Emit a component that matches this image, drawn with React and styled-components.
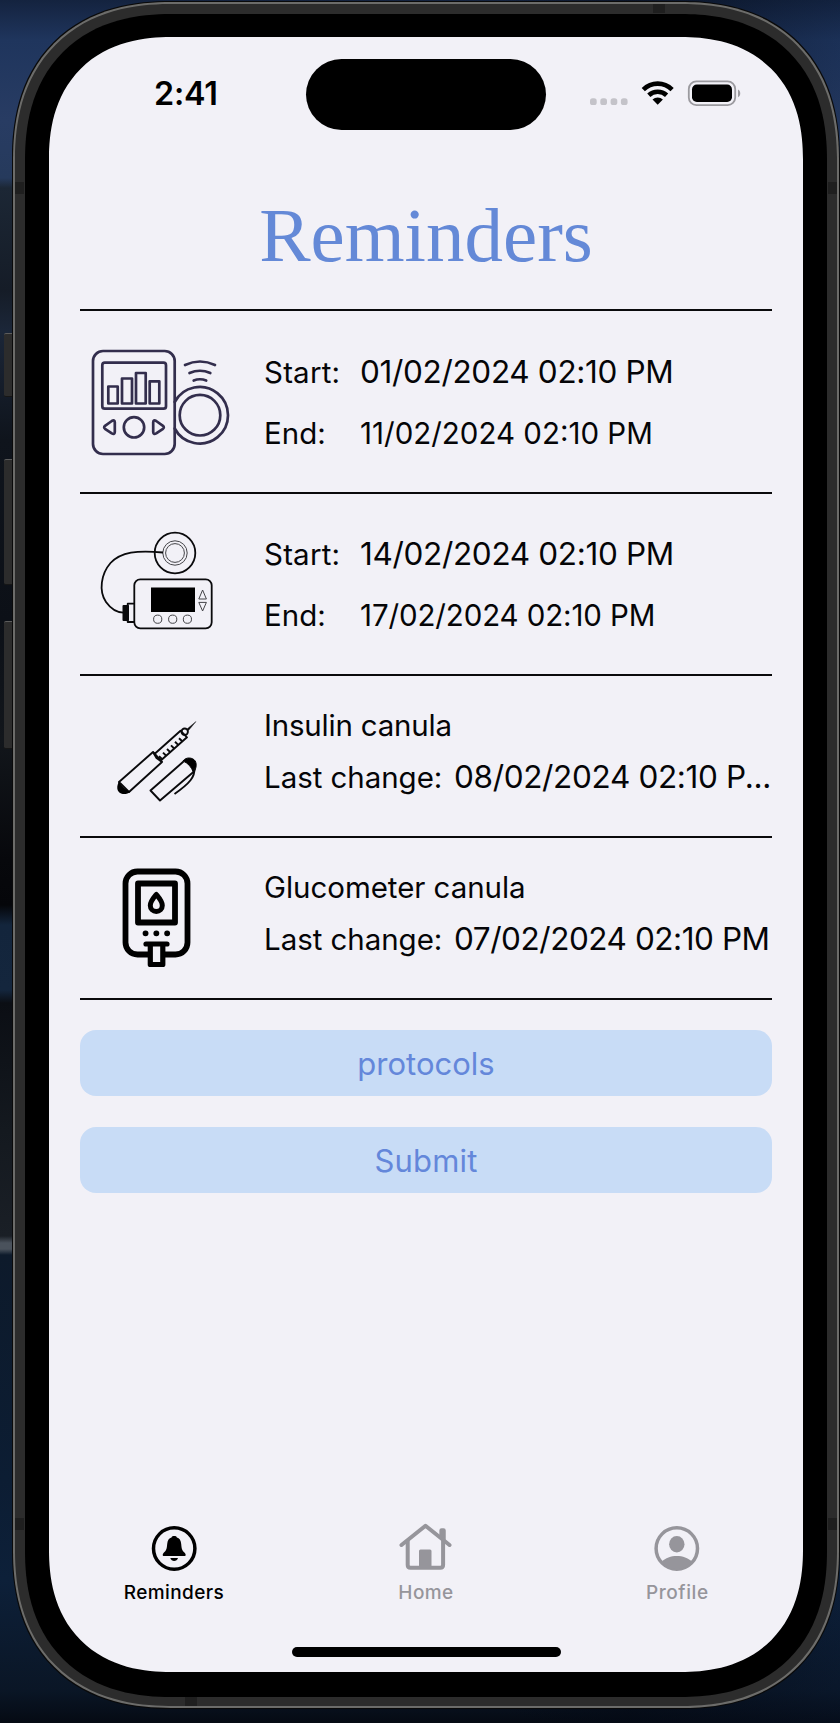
import React from "react";
import styled, { createGlobalStyle } from "styled-components";

const Global = createGlobalStyle`
  *, *::before, *::after { box-sizing: border-box; }
  body { margin: 0; font-family: Inter, "Liberation Sans", sans-serif; color: #050507; }
`;

const Desktop = styled.div`
  width: 840px;
  height: 1723px;
  overflow: hidden;
  padding: 2px 0 0 13px;
  position: relative;
  background:
    linear-gradient(90deg, transparent 0 60%, rgba(4, 10, 22, 0.55) 75%, rgba(10, 28, 60, 0.2) 100%),
    linear-gradient(
      180deg,
      #14233f 0, #1f355d 40px, #283c63 120px, #263a5c 178px, #1c2735 188px,
      #151c27 290px, #1b2638 330px, #0f141c 440px, #0c1017 620px, #12161b 740px,
      #07080c 860px, #05060a 905px, #13253c 925px, #14263d 990px, #0b0e14 1003px,
      #14191f 1130px, #1a1f26 1236px, #4a525c 1243px, #4a525c 1249px, #0d1a2b 1255px,
      #0c1d33 1480px, #0d2039 1580px, #0a1626 1690px, #050a13 1723px
    );
`;

const SideButton = styled.div`
  position: absolute;
  left: 4px;
  top: ${(p) => p.$top}px;
  width: 10px;
  height: ${(p) => p.$height}px;
  background: #2c2c2c;
  border-top: 1px solid #5c5c5c;
  border-bottom: 1px solid #161616;
  border-radius: 2px 0 0 2px;
`;

const Frame = styled.div`
  position: relative;
  width: 826px;
  height: 1706px;
  padding: 10px 10px 9px;
  background: #2c2c2c;
  border: 2px solid #6c6c6a;
  border-radius: 138px;
  box-shadow: 0 0 0 1px #0a0a0a;
  @supports (corner-shape: superellipse(1.2)) {
    border-radius: 158px;
    corner-shape: superellipse(1.2);
  }
`;

const Band = styled.div`
  position: absolute;
  background: #1f1f1f;
  width: ${(p) => (p.$vertical ? 9 : 12)}px;
  height: ${(p) => (p.$vertical ? 12 : 9)}px;
  ${(p) => p.$side}: 0;
  ${(p) => (p.$vertical ? "top" : "left")}: ${(p) => p.$at}px;
`;

const Bezel = styled.div`
  height: 100%;
  padding: 23px 24px 25px;
  background: #000;
  border-radius: 128px;
  @supports (corner-shape: superellipse(1.2)) {
    border-radius: 146px;
    corner-shape: superellipse(1.2);
  }
`;

const Screen = styled.main`
  height: 100%;
  display: flex;
  flex-direction: column;
  background: #f2f1f7;
  border-radius: 108px;
  @supports (corner-shape: superellipse(1.2)) {
    border-radius: 122px;
    corner-shape: superellipse(1.2);
  }
`;

const StatusBar = styled.header`
  flex: none;
  height: 92px;
  padding-top: 22px;
  display: grid;
  grid-template-columns: 257px 240px 1fr;
  align-items: start;
`;

const Clock = styled.div`
  height: 54px;
  padding: 17px 0 0 105px;
  font-size: 32.3px;
  line-height: 36px;
  font-weight: 600;
  letter-spacing: -0.2px;
  color: #000;
`;

const Island = styled.div`
  height: 70.5px;
  border-radius: 36px;
  background: #000;
`;

const Indicators = styled.div`
  display: flex;
  align-items: flex-end;
  padding: 21px 0 0 44px;
`;

const Title = styled.h1`
  flex: none;
  margin: 0;
  height: 180px;
  padding-top: 62px;
  font: 400 77px/88px "Liberation Serif", serif;
  text-align: center;
  color: #6489d7;
`;

const List = styled.section`
  flex: none;
  margin: 0 31px;
  border-top: 2px solid #0a0a0c;
`;

const Row = styled.article`
  height: ${(p) => p.$height}px;
  display: flex;
  border-bottom: 2px solid #0a0a0c;
`;

const Picture = styled.div`
  flex: none;
  width: 184px;
  svg { display: block; }
`;

const Details = styled.div`
  flex: 1;
  min-width: 0;
  padding-top: ${(p) => p.$top}px;
  display: flex;
  flex-direction: column;
  gap: ${(p) => p.$gap}px;
`;

const Line = styled.div`
  height: 40px;
  display: flex;
  align-items: center;
  white-space: nowrap;
  line-height: 40px;
`;

const Label = styled.span`
  flex: none;
  width: ${(p) => (p.$width ? p.$width + "px" : "auto")};
  font-size: 29.5px;
  letter-spacing: ${(p) => p.$track || 0}px;
`;

const Value = styled.span`
  font-size: ${(p) => p.$size || 31.5}px;
  letter-spacing: ${(p) => p.$track || 0}px;
`;

const Actions = styled.div`
  flex: 1;
  padding: 30px 31px 0;
  display: flex;
  flex-direction: column;
  gap: 31px;
`;

const Button = styled.button`
  height: 66px;
  border: 0;
  border-radius: 16px;
  background: #c8dcf6;
  color: #6487da;
  font: 400 31px/66px Inter, sans-serif;
  letter-spacing: ${(p) => p.$track || 0}px;
`;

const Tabs = styled.nav`
  flex: none;
  height: 150px;
  padding-top: 24.5px;
  display: grid;
  grid-template-columns: repeat(3, 1fr);
`;

const Tab = styled.div`
  display: flex;
  flex-direction: column;
  align-items: center;
  color: ${(p) => (p.$active ? "#000" : "#96959b")};
  font-size: 19px;
  line-height: 24px;
  font-weight: 500;
  letter-spacing: ${(p) => p.$track || 0}px;
  padding-right: ${(p) => (p.$active ? 1.5 : 0)}px;
  svg { display: block; margin-bottom: 9px; }
`;

const HomeBar = styled.div`
  flex: none;
  width: 269px;
  height: 9.5px;
  margin: 0 auto 15.5px;
  border-radius: 5px;
  background: #000;
`;

const Status = () => (
  <svg width="152" height="27" viewBox="0 0 152 27">
    <g fill="#c4c3c9">
      {[0, 10.3, 20.6, 30.9].map((x) => (
        <rect key={x} x={x} y="18.3" width="6.7" height="6.7" rx="2.6" />
      ))}
    </g>
    <g fill="none" stroke="#000" strokeWidth="4.6">
      <path d="M53.3 9.6C61.4 1.6 74 1.6 82.1 9.6" />
      <path d="M58.8 15.2C63.7 10.6 71.7 10.6 76.6 15.2" />
    </g>
    <path d="M62.5 19.5C65.5 16.8 69.9 16.8 72.9 19.5L67.7 24.8Z" fill="#000" />
    <rect x="98.8" y="1.4" width="46.4" height="23.8" rx="7.6" fill="none" stroke="#9b9a9f" strokeWidth="1.8" />
    <rect x="102" y="4.6" width="40" height="17.4" rx="4.8" fill="#000" />
    <path d="M148 9.4C151 10.8 151 15.8 148 17.2Z" fill="#9b9a9f" />
  </svg>
);

const Sensor = () => (
  <svg width="185" height="178" viewBox="80 311 185 178" fill="none" stroke="#332e4d" strokeWidth="2.700" strokeLinejoin="round" strokeLinecap="round">
    <rect x="93" y="351" width="81.700" height="103" rx="10" />
    <rect x="102.300" y="362.700" width="63.700" height="46" rx="2.500" />
    <path d="M108.300 386.500h9.400V403.500h-9.400ZM122 378.500h10V403.500h-10ZM136 373h9.700V403.500H136ZM149.700 381.300h9.600V403.500h-9.600Z" />
    <circle cx="134" cy="427.300" r="10.200" />
    <path d="M105 425.800L111.800 421Q114.600 419.400 114.800 422.400V432Q114.600 435 111.800 433.400L105 428.800Q103.300 427.300 105 425.800ZM163 425.800L156.200 421Q153.400 419.400 153.200 422.400V432Q153.400 435 156.200 433.400L163 428.800Q164.700 427.300 163 425.800Z" />
    <path d="M174.700 402A28.300 28.300 0 1 1 174.700 428.500" />
    <circle cx="200" cy="415.200" r="20.300" />
    <path d="M185 365Q200 358 215 365M189.500 373Q200 368.500 210.300 373M193.700 380.500Q200 378 206.200 380.500" />
  </svg>
);

const Pump = () => (
  <svg width="185" height="178" viewBox="80 494 185 178" fill="none" stroke="#0a0a0c" strokeWidth="1.8" strokeLinejoin="round">
    <circle cx="175" cy="553" r="20.300" />
    <g stroke="#444448" strokeWidth="1">
      <circle cx="175" cy="553" r="12.200" />
      <circle cx="175" cy="553" r="9.400" />
      <path d="M202.600 590L206.400 599H198.800ZM202.600 611L206.400 602.400H198.800Z" />
      <circle cx="157.700" cy="619.200" r="4.100" />
      <circle cx="172.700" cy="619.200" r="4.100" />
      <circle cx="187.400" cy="619.200" r="4.100" />
    </g>
    <path d="M163 552.500C137 550 121 552 110.500 563C101 574 98.500 591 106 602C111 609 117 612.500 123.500 612.700" />
    <rect x="134.300" y="579.300" width="77.400" height="49" rx="6" />
    <path d="M134.300 603.700H127.700V622H134.300" />
    <path d="M123.500 606H128V620H123.500Z" fill="#0a0a0c" strokeWidth="2" />
    <rect x="151" y="587.500" width="44" height="24.500" fill="#000" stroke="none" />
  </svg>
);

const Pen = () => (
  <svg width="185" height="158" viewBox="80 676 185 158" fill="none" stroke="#0a0a0c" strokeWidth="1.9" strokeLinejoin="round">
    <path d="M119 782L153 752L162 762L129 792Z" />
    <path d="M119 781.500C122 787 126 790.500 130.500 791.500C126 796 118 794.500 117.300 788.500C117 785.500 118 783.500 119 781.500Z" fill="#000" stroke="none" />
    <path d="M154.500 754L180.500 730.700L187 737.300L160.800 760.500M153 752L156.500 758L162 762" />
    <path d="M162.200 759.300L159 756.200M166.200 755.700L163 752.600M170.200 752.100L167 749M174.200 748.500L171 745.400M178.200 744.900L175 741.800M182.200 741.300L179 738.200" />
    <circle cx="184.700" cy="731.700" r="3.200" />
    <path d="M187 729L196 721.500L188.500 730.500Z" fill="#0a0a0c" strokeWidth=".4" />
    <path d="M194 771.500L160 800.500L150.500 790.500L183.500 761.500" />
    <path d="M183 761C186 756.500 193 757.500 195.200 761C197.400 765 195.500 770 193.500 772.500C191.500 767 188 763 183 761Z" fill="#000" stroke="#000" strokeWidth="1" />
    <path d="M194.500 768C195 777 190 783 174.500 794" />
  </svg>
);

const Meter = () => (
  <svg width="185" height="158" viewBox="80 838 185 158" fill="none" stroke="#000" strokeWidth="5.8" strokeLinejoin="round" strokeLinecap="round">
    <path d="M148 954.500H137.500A12 12 0 0 1 125.500 942.500V883.500A12 12 0 0 1 137.500 871.500H175.500A12 12 0 0 1 187.500 883.500V942.500A12 12 0 0 1 175.500 954.500H165" />
    <rect x="138" y="883.500" width="37" height="39" />
    <path d="M156.300 894.500C153 898.500 150.300 901.500 150.300 905.500A6 6 0 0 0 162.300 905.500C162.300 901.500 159.600 898.500 156.300 894.500Z" strokeWidth="5" />
    <path d="M145.500 933.300h.1M156.300 933.300h.1M167.100 933.300h.1" />
    <path d="M146 944H167M150.300 945V964.500H162.800V945" strokeWidth="5.200" />
  </svg>
);

const BellIcon = () => (
  <svg width="56" height="50" viewBox="146 1522 56 50" fill="#000">
    <circle cx="174.200" cy="1548.500" r="20.700" fill="none" stroke="#000" strokeWidth="3.500" />
    <path d="M163.500 1556C162.500 1556 162.400 1554 163.500 1553C166.500 1550.500 166.800 1548.500 167.200 1544C167.500 1540 169 1538.300 171.500 1537.500C172 1535.600 176.400 1535.600 176.900 1537.500C179.400 1538.300 180.900 1540 181.200 1544C181.600 1548.500 181.900 1550.500 184.900 1553C186 1554 185.900 1556 184.900 1556Z" />
    <path d="M170.300 1558H178C177 1562 171.300 1562 170.300 1558Z" />
  </svg>
);

const HomeIcon = () => (
  <svg width="56" height="50" viewBox="398 1522 56 50" fill="none" stroke="#96959b" strokeWidth="4" strokeLinecap="round" strokeLinejoin="round">
    <path d="M401.500 1545L425.500 1525.800L449.500 1545" />
    <path d="M407.700 1541V1565Q407.700 1567.800 410.500 1567.800H440.300Q443.100 1567.800 443.100 1565V1541" />
    <path d="M441.600 1537V1530.500H443.500V1539" strokeWidth="4.500" />
    <path d="M419 1568V1551Q419 1549.500 420.500 1549.500H430Q431.500 1549.500 431.500 1551V1568Z" fill="#96959b" stroke="none" />
  </svg>
);

const ProfileIcon = () => (
  <svg width="56" height="50" viewBox="649 1522 56 50" fill="#96959b">
    <circle cx="676.800" cy="1548.500" r="20.700" fill="none" stroke="#96959b" strokeWidth="3.500" />
    <ellipse cx="676.800" cy="1544.300" rx="7.700" ry="8.200" />
    <path d="M662 1561.500C668.500 1554 685 1554 691.700 1561.500C687 1571.500 667 1571.500 662 1561.500Z" />
  </svg>
);

export default function App() {
  return (
    <Desktop>
      <Global />
      <SideButton $top={333} $height={64} />
      <SideButton $top={459} $height={126} />
      <SideButton $top={621} $height={128} />
      <Frame>
        <Band $side="left" $vertical $at={178} />
        <Band $side="right" $vertical $at={178} />
        <Band $side="left" $vertical $at={1514} />
        <Band $side="right" $vertical $at={1514} />
        <Band $side="top" $at={638} />
        <Band $side="bottom" $at={170} />
        <Bezel>
          <Screen>
            <StatusBar>
              <Clock>2:41</Clock>
              <Island />
              <Indicators><Status /></Indicators>
            </StatusBar>
            <Title>Reminders</Title>
            <List>
              <Row $height={182.7}>
                <Picture><Sensor /></Picture>
                <Details $top={40.5} $gap={21}>
                  <Line><Label $width={96} $track={0.2}>Start:</Label><Value $track={-0.33}>01/02/2024 02:10 PM</Value></Line>
                  <Line><Label $width={96}>End:</Label><Value $size={29.5}>11/02/2024 02:10 PM</Value></Line>
                </Details>
              </Row>
              <Row $height={182.3}>
                <Picture><Pump /></Picture>
                <Details $top={40} $gap={21}>
                  <Line><Label $width={96} $track={0.2}>Start:</Label><Value $track={-0.33}>14/02/2024 02:10 PM</Value></Line>
                  <Line><Label $width={96}>End:</Label><Value $size={29.5} $track={-0.12}>17/02/2024 02:10 PM</Value></Line>
                </Details>
              </Row>
              <Row $height={161.8}>
                <Picture><Pen /></Picture>
                <Details $top={29} $gap={12}>
                  <Line><Label $track={-0.2}>Insulin canula</Label></Line>
                  <Line><Label $width={190} $track={-0.05}>Last change:</Label><Value $track={-0.34}>08/02/2024 02:10 P...</Value></Line>
                </Details>
              </Row>
              <Row $height={161.8}>
                <Picture><Meter /></Picture>
                <Details $top={29} $gap={12}>
                  <Line><Label $track={-0.05}>Glucometer canula</Label></Line>
                  <Line><Label $width={190} $track={-0.05}>Last change:</Label><Value $track={-0.45}>07/02/2024 02:10 PM</Value></Line>
                </Details>
              </Row>
            </List>
            <Actions>
              <Button>protocols</Button>
              <Button $track={0.15}>Submit</Button>
            </Actions>
            <Tabs>
              <Tab $active $track={0.4}><BellIcon />Reminders</Tab>
              <Tab $track={0.4}><HomeIcon />Home</Tab>
              <Tab $track={0.6}><ProfileIcon />Profile</Tab>
            </Tabs>
            <HomeBar />
          </Screen>
        </Bezel>
      </Frame>
    </Desktop>
  );
}
